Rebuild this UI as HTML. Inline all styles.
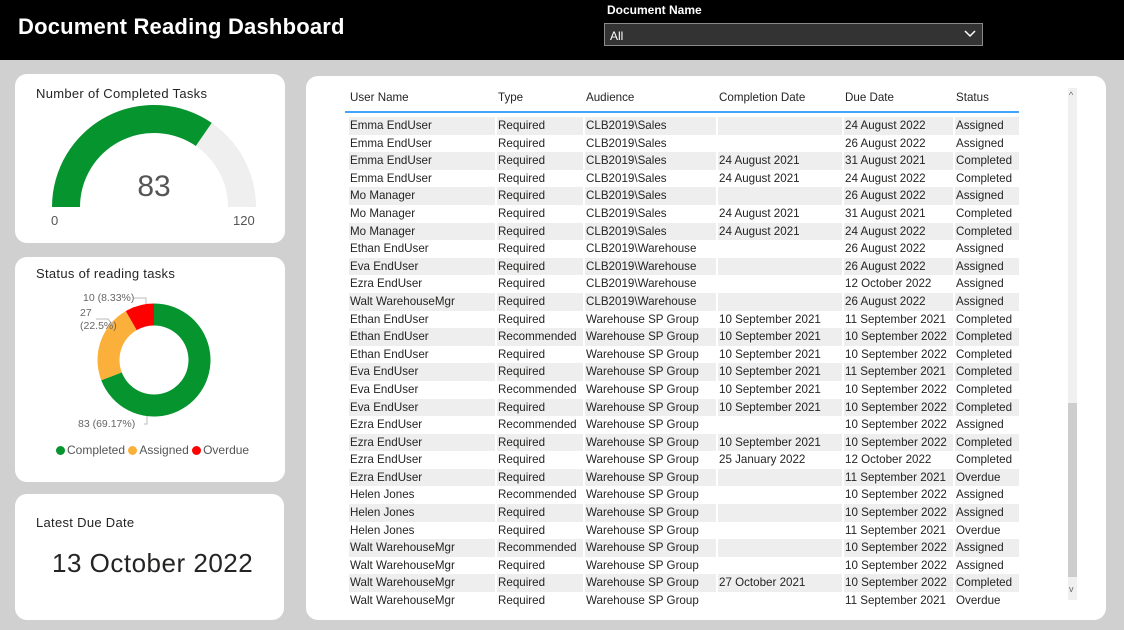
<!DOCTYPE html>
<html><head><meta charset="utf-8"><style>
*{margin:0;padding:0;box-sizing:border-box}
body{width:1124px;height:630px;background:#d1d0d0;position:relative;overflow:hidden;font-family:"Liberation Sans",sans-serif;color:#252423}
.hdr{position:absolute;left:0;top:0;width:1124px;height:60px;background:#000}
.title{position:absolute;left:18px;top:14px;color:#fff;font-size:22px;font-weight:bold;letter-spacing:0.2px}
.dl{position:absolute;left:607px;top:3px;color:#fff;font-size:12px;font-weight:bold}
.dd{position:absolute;left:604px;top:23px;width:379px;height:23px;background:#333;border:1px solid #8a8a8a;color:#fff;font-size:12px;padding:5px 0 0 5px}
.card{position:absolute;background:#fff;border-radius:12px}
.ct{position:absolute;font-size:13px;color:#252423;letter-spacing:0.3px}
.tbl{position:absolute;left:349px;top:117px;width:670px}
.row{height:17.6px;display:flex;font-size:11.6px;line-height:17.6px;color:#252423}
.row.s{background:#eeeeee}
.row div{border-right:2px solid #fff;padding-left:1px;white-space:nowrap;overflow:hidden}
.c1{width:148px}.c2{width:88px}.c3{width:133px}.c4{width:126px}.c5{width:111px}.c6{width:64px;border-right:none!important}
.th{position:absolute;top:91px;font-size:11.6px;color:#252423}
.dot{display:inline-block;width:9px;height:9px;border-radius:50%;margin-right:2px;vertical-align:-1px}
</style></head><body>
<div class="hdr"></div>
<div class="title">Document Reading Dashboard</div>
<div class="dl">Document Name</div>
<div class="dd">All<svg style="position:absolute;right:6px;top:6px" width="12" height="8" viewBox="0 0 12 8"><path d="M1 1 L6 6 L11 1" stroke="#fff" stroke-width="1.5" fill="none"/></svg></div>

<div class="card" style="left:15px;top:74px;width:270px;height:169px"></div>
<div class="card" style="left:15px;top:257px;width:270px;height:225px"></div>
<div class="card" style="left:15px;top:494px;width:269px;height:126px"></div>
<div class="card" style="left:306px;top:76px;width:800px;height:544px"></div>

<div class="ct" style="left:36px;top:86px">Number of Completed Tasks</div>
<svg style="position:absolute;left:0;top:0" width="300" height="630">
<path d="M52,207 A102,102 0 0 1 211.8,122.9 L195.9,146 A74,74 0 0 0 80,207 Z" fill="#05942d"/>
<path d="M211.8,122.9 A102,102 0 0 1 256,207 L228,207 A74,74 0 0 0 195.9,146 Z" fill="#f0efef"/>
<path d="M154,303.5 A56.5,56.5 0 1 1 101.25,380.25 L121.79,372.36 A34.5,34.5 0 1 0 154,325.5 Z" fill="#05942d"/>
<path d="M101.25,380.25 A56.5,56.5 0 0 1 125.75,311.07 L136.75,330.12 A34.5,34.5 0 0 0 121.79,372.36 Z" fill="#fbb03b"/>
<path d="M125.75,311.07 A56.5,56.5 0 0 1 154,303.5 L154,325.5 A34.5,34.5 0 0 0 136.75,330.12 Z" fill="#ff0000"/>
<path d="M134,298 H146 V304" stroke="#bbb" fill="none"/>
<path d="M96,319 H108 L113,325" stroke="#bbb" fill="none"/>
<path d="M144,424 H147 V416" stroke="#bbb" fill="none"/>
</svg>
<div style="position:absolute;left:130px;top:170px;width:48px;text-align:center;font-size:30px;color:#555">83</div>
<div style="position:absolute;left:51px;top:213px;font-size:13px;color:#555">0</div>
<div style="position:absolute;left:233px;top:213px;font-size:13px;color:#555">120</div>

<div class="ct" style="left:36px;top:266px">Status of reading tasks</div>
<div style="position:absolute;left:83px;top:292px;font-size:10.5px;color:#666">10 (8.33%)</div>
<div style="position:absolute;left:80px;top:307px;font-size:10.5px;color:#666;line-height:13px">27<br>(22.5%)</div>
<div style="position:absolute;left:78px;top:418px;font-size:10.5px;color:#666">83 (69.17%)</div>
<div style="position:absolute;left:56px;top:443px;font-size:12px;color:#555;white-space:nowrap"><span class="dot" style="background:#05942d"></span>Completed <span class="dot" style="background:#fbb03b"></span>Assigned <span class="dot" style="background:#f00"></span>Overdue</div>

<div class="ct" style="left:36px;top:515px">Latest Due Date</div>
<div style="position:absolute;left:52px;top:548px;font-size:26px;color:#252423;letter-spacing:0.5px">13 October 2022</div>

<div class="th" style="left:350px">User Name</div>
<div class="th" style="left:498px">Type</div>
<div class="th" style="left:586px">Audience</div>
<div class="th" style="left:719px">Completion Date</div>
<div class="th" style="left:845px">Due Date</div>
<div class="th" style="left:956px">Status</div>
<div style="position:absolute;left:345px;top:111px;width:674px;height:2px;background:#41a4ff"></div>
<div style="position:absolute;left:1068px;top:88px;width:9px;height:512px;background:#f0f0f0"></div>
<div style="position:absolute;left:1068px;top:403px;width:9px;height:174px;background:#cdcdcd"></div>
<div style="position:absolute;left:1069px;top:90px;font-size:9px;color:#666">^</div>
<div style="position:absolute;left:1069px;top:584px;font-size:9px;color:#666">v</div>
<div class="tbl">
<div class="row s"><div class="c1">Emma EndUser</div><div class="c2">Required</div><div class="c3">CLB2019\Sales</div><div class="c4"></div><div class="c5">24 August 2022</div><div class="c6">Assigned</div></div>
<div class="row"><div class="c1">Emma EndUser</div><div class="c2">Required</div><div class="c3">CLB2019\Sales</div><div class="c4"></div><div class="c5">26 August 2022</div><div class="c6">Assigned</div></div>
<div class="row s"><div class="c1">Emma EndUser</div><div class="c2">Required</div><div class="c3">CLB2019\Sales</div><div class="c4">24 August 2021</div><div class="c5">31 August 2021</div><div class="c6">Completed</div></div>
<div class="row"><div class="c1">Emma EndUser</div><div class="c2">Required</div><div class="c3">CLB2019\Sales</div><div class="c4">24 August 2021</div><div class="c5">24 August 2022</div><div class="c6">Completed</div></div>
<div class="row s"><div class="c1">Mo Manager</div><div class="c2">Required</div><div class="c3">CLB2019\Sales</div><div class="c4"></div><div class="c5">26 August 2022</div><div class="c6">Assigned</div></div>
<div class="row"><div class="c1">Mo Manager</div><div class="c2">Required</div><div class="c3">CLB2019\Sales</div><div class="c4">24 August 2021</div><div class="c5">31 August 2021</div><div class="c6">Completed</div></div>
<div class="row s"><div class="c1">Mo Manager</div><div class="c2">Required</div><div class="c3">CLB2019\Sales</div><div class="c4">24 August 2021</div><div class="c5">24 August 2022</div><div class="c6">Completed</div></div>
<div class="row"><div class="c1">Ethan EndUser</div><div class="c2">Required</div><div class="c3">CLB2019\Warehouse</div><div class="c4"></div><div class="c5">26 August 2022</div><div class="c6">Assigned</div></div>
<div class="row s"><div class="c1">Eva EndUser</div><div class="c2">Required</div><div class="c3">CLB2019\Warehouse</div><div class="c4"></div><div class="c5">26 August 2022</div><div class="c6">Assigned</div></div>
<div class="row"><div class="c1">Ezra EndUser</div><div class="c2">Required</div><div class="c3">CLB2019\Warehouse</div><div class="c4"></div><div class="c5">12 October 2022</div><div class="c6">Assigned</div></div>
<div class="row s"><div class="c1">Walt WarehouseMgr</div><div class="c2">Required</div><div class="c3">CLB2019\Warehouse</div><div class="c4"></div><div class="c5">26 August 2022</div><div class="c6">Assigned</div></div>
<div class="row"><div class="c1">Ethan EndUser</div><div class="c2">Required</div><div class="c3">Warehouse SP Group</div><div class="c4">10 September 2021</div><div class="c5">11 September 2021</div><div class="c6">Completed</div></div>
<div class="row s"><div class="c1">Ethan EndUser</div><div class="c2">Recommended</div><div class="c3">Warehouse SP Group</div><div class="c4">10 September 2021</div><div class="c5">10 September 2022</div><div class="c6">Completed</div></div>
<div class="row"><div class="c1">Ethan EndUser</div><div class="c2">Required</div><div class="c3">Warehouse SP Group</div><div class="c4">10 September 2021</div><div class="c5">10 September 2022</div><div class="c6">Completed</div></div>
<div class="row s"><div class="c1">Eva EndUser</div><div class="c2">Required</div><div class="c3">Warehouse SP Group</div><div class="c4">10 September 2021</div><div class="c5">11 September 2021</div><div class="c6">Completed</div></div>
<div class="row"><div class="c1">Eva EndUser</div><div class="c2">Recommended</div><div class="c3">Warehouse SP Group</div><div class="c4">10 September 2021</div><div class="c5">10 September 2022</div><div class="c6">Completed</div></div>
<div class="row s"><div class="c1">Eva EndUser</div><div class="c2">Required</div><div class="c3">Warehouse SP Group</div><div class="c4">10 September 2021</div><div class="c5">10 September 2022</div><div class="c6">Completed</div></div>
<div class="row"><div class="c1">Ezra EndUser</div><div class="c2">Recommended</div><div class="c3">Warehouse SP Group</div><div class="c4"></div><div class="c5">10 September 2022</div><div class="c6">Assigned</div></div>
<div class="row s"><div class="c1">Ezra EndUser</div><div class="c2">Required</div><div class="c3">Warehouse SP Group</div><div class="c4">10 September 2021</div><div class="c5">10 September 2022</div><div class="c6">Completed</div></div>
<div class="row"><div class="c1">Ezra EndUser</div><div class="c2">Required</div><div class="c3">Warehouse SP Group</div><div class="c4">25 January 2022</div><div class="c5">12 October 2022</div><div class="c6">Completed</div></div>
<div class="row s"><div class="c1">Ezra EndUser</div><div class="c2">Required</div><div class="c3">Warehouse SP Group</div><div class="c4"></div><div class="c5">11 September 2021</div><div class="c6">Overdue</div></div>
<div class="row"><div class="c1">Helen Jones</div><div class="c2">Recommended</div><div class="c3">Warehouse SP Group</div><div class="c4"></div><div class="c5">10 September 2022</div><div class="c6">Assigned</div></div>
<div class="row s"><div class="c1">Helen Jones</div><div class="c2">Required</div><div class="c3">Warehouse SP Group</div><div class="c4"></div><div class="c5">10 September 2022</div><div class="c6">Assigned</div></div>
<div class="row"><div class="c1">Helen Jones</div><div class="c2">Required</div><div class="c3">Warehouse SP Group</div><div class="c4"></div><div class="c5">11 September 2021</div><div class="c6">Overdue</div></div>
<div class="row s"><div class="c1">Walt WarehouseMgr</div><div class="c2">Recommended</div><div class="c3">Warehouse SP Group</div><div class="c4"></div><div class="c5">10 September 2022</div><div class="c6">Assigned</div></div>
<div class="row"><div class="c1">Walt WarehouseMgr</div><div class="c2">Required</div><div class="c3">Warehouse SP Group</div><div class="c4"></div><div class="c5">10 September 2022</div><div class="c6">Assigned</div></div>
<div class="row s"><div class="c1">Walt WarehouseMgr</div><div class="c2">Required</div><div class="c3">Warehouse SP Group</div><div class="c4">27 October 2021</div><div class="c5">10 September 2022</div><div class="c6">Completed</div></div>
<div class="row"><div class="c1">Walt WarehouseMgr</div><div class="c2">Required</div><div class="c3">Warehouse SP Group</div><div class="c4"></div><div class="c5">11 September 2021</div><div class="c6">Overdue</div></div>
</div>
</body></html>
